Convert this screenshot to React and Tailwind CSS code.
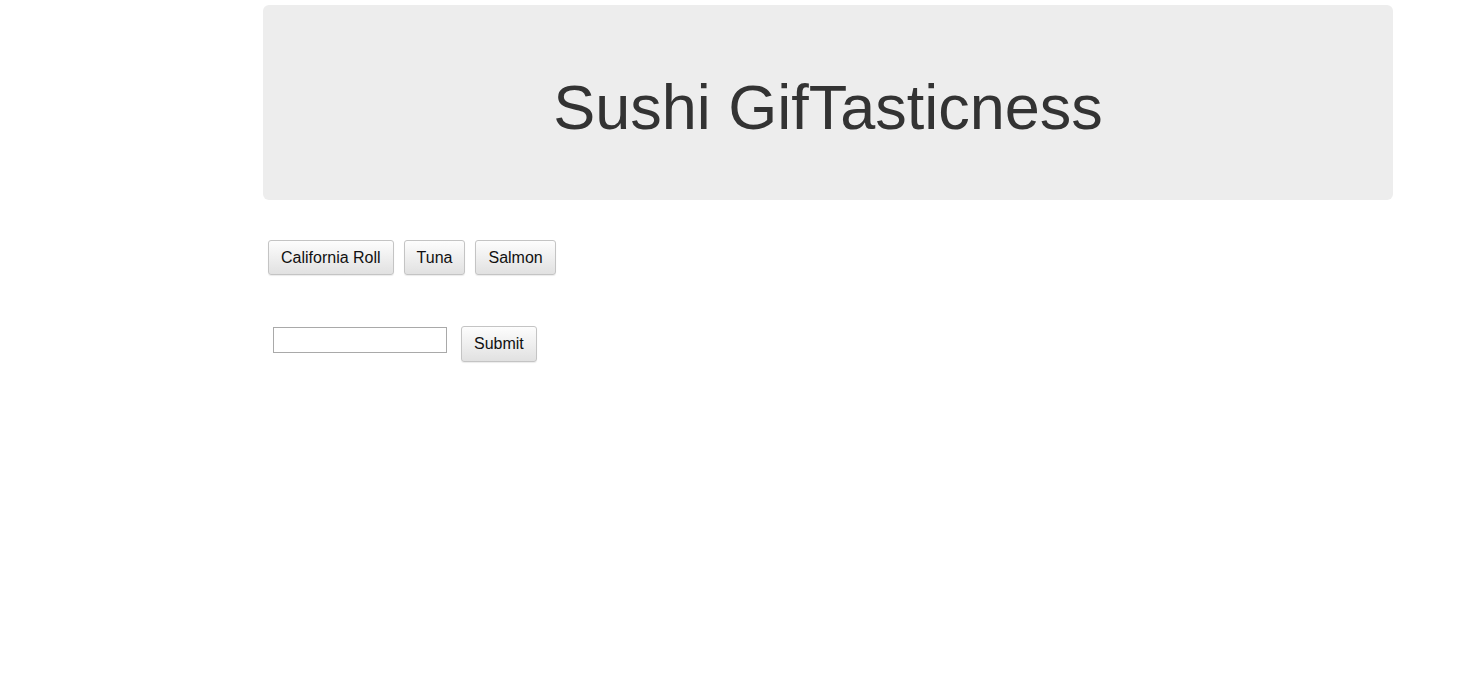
import React from 'react';

const sushi = ['California Roll', 'Tuna', 'Salmon'];

const btn =
  'h-[35px] px-[12px] text-[16px] text-[#111] rounded-[3px] border border-[#c4c4c4] bg-gradient-to-b from-[#fdfdfd] to-[#e1e1e1] shadow-[0_1px_1px_rgba(0,0,0,0.08)]';

const App = () => {
  return (
    <div className="min-h-screen bg-white font-['Liberation_Sans',Arial,sans-serif]">
      <div className="ml-[263px] w-[1130px] pt-[5px]">
        <div className="h-[195px] rounded-[6px] bg-[#ededed] flex items-center justify-center">
          <h1 className="text-[63px] text-[#333] leading-none mt-[10px]">Sushi GifTasticness</h1>
        </div>

        <div className="flex gap-[10px] mt-[40px] ml-[5px]">
          {sushi.map((s) => (
            <button key={s} className={btn}>
              {s}
            </button>
          ))}
        </div>

        <div className="flex items-start mt-[51px] ml-[10px]">
          <input
            type="text"
            className="w-[174px] h-[26px] mt-[1px] border border-[#a9a9a9] bg-white outline-none"
          />
          <button className={btn + ' ml-[14px] h-[36px]'}>Submit</button>
        </div>
      </div>
    </div>
  );
};

export default App;
